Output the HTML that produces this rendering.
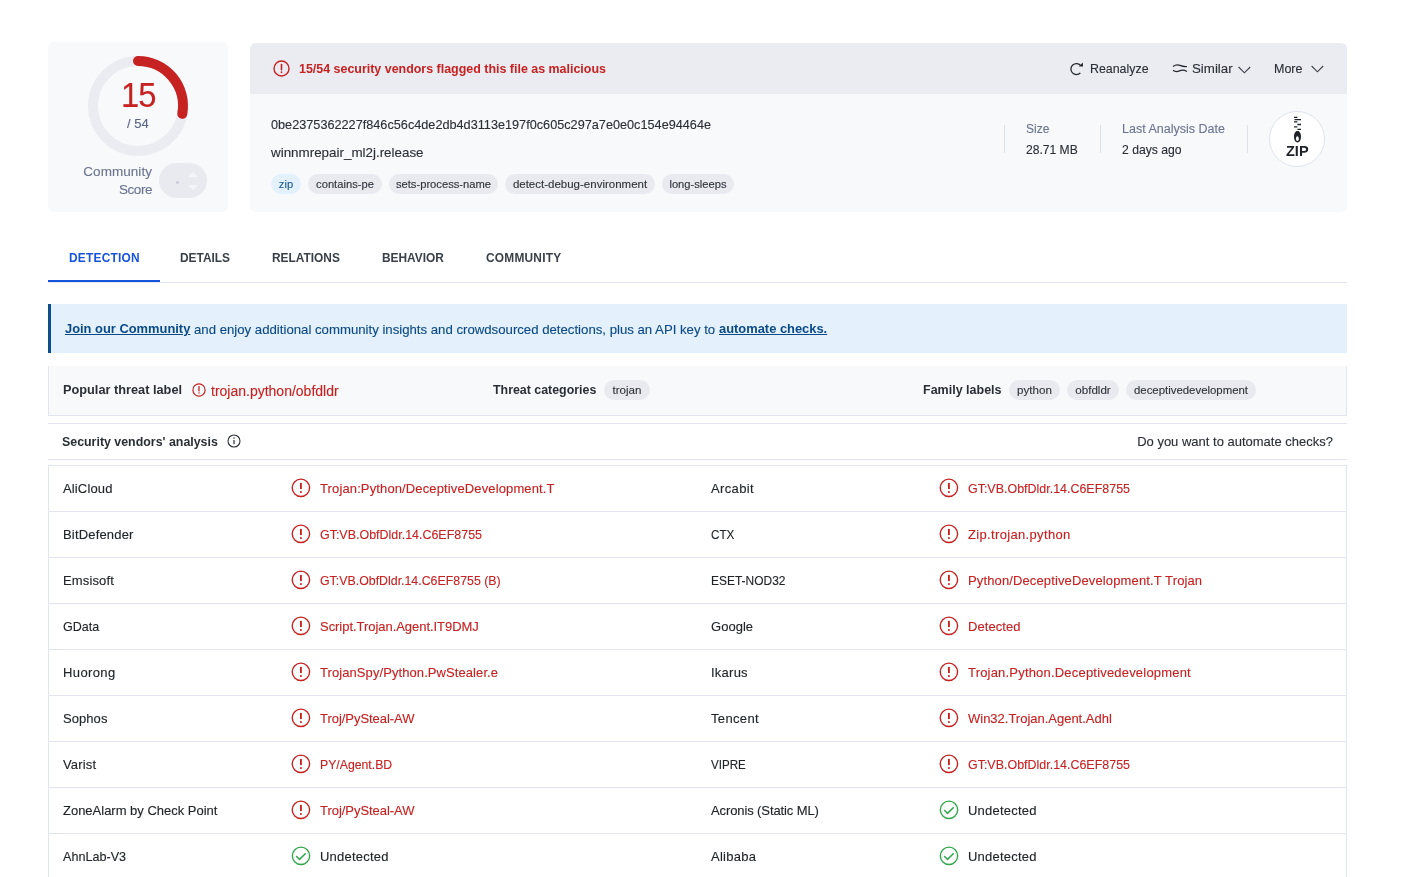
<!DOCTYPE html>
<html><head><meta charset="utf-8">
<style>
*{box-sizing:border-box;margin:0;padding:0}
html,body{width:1405px;height:877px;overflow:hidden;background:#fff}
body{will-change:transform}
.t,.tag{-webkit-text-stroke:0.12px currentColor}
.t[style*="font-weight:bold"],#tabs .t{-webkit-text-stroke:0}
body{font-family:"Liberation Sans",sans-serif;color:#212529;position:relative}
.abs{position:absolute}
.t{position:absolute;white-space:nowrap;line-height:1}
#score{left:48px;top:42px;width:180px;height:170px;background:#f8f9fb;border-radius:6px}
#main{left:250px;top:43px;width:1097px;height:169px;background:#f8f9fb;border-radius:6px;overflow:hidden}
#mhead{left:0;top:0;width:1097px;height:51px;background:#ebecf1}
.red{color:#c62222}
.tag{position:absolute;height:20px;border-radius:10px;background:#e9eaef;color:#2f343b;font-size:11.2px;line-height:20px;padding:0;text-align:center;white-space:nowrap}
.vdiv{position:absolute;width:1px;background:#dfe1e8;top:125px;height:28px}
.lbl{color:#6b7590}
#tabs .t{font-weight:bold;font-size:11.9px;color:#394049;top:253px!important}
#banner{left:48px;top:304px;width:1299px;height:49px;background:#e4f1fc;border-left:3px solid #0c4d8a}
#threat{left:48px;top:366px;width:1299px;height:50px;background:#f8f9fb;border:1px solid #e2e5f0;border-top:none}
#sech{left:48px;top:423px;width:1299px;height:37px;border-top:1px solid #e2e5f0;border-bottom:1px solid #e2e5f0}
#table{left:48px;top:465px;width:1299px;height:420px;border:1px solid #e2e5f0;border-bottom:none}
.row{position:absolute;left:0;width:1297px;height:46px;border-bottom:1px solid #e2e5f0}
.row .t{font-size:13px;top:16px}
.ico{position:absolute;width:20px;height:20px;top:12px}
</style></head>
<body>
<!-- score card -->
<div id="score" class="abs">
  <svg class="abs" style="left:0;top:0" width="180" height="170" viewBox="0 0 180 170">
    <circle cx="90" cy="64" r="45" fill="none" stroke="#ebecf1" stroke-width="10"/>
    <path d="M90 19 A45 45 0 0 1 134.3 71.8" fill="none" stroke="#c62222" stroke-width="10" stroke-linecap="round"/>
  </svg>
  <div class="t red" style="left:73px;top:36px;font-size:34.5px;letter-spacing:-1px;transform:scaleX(0.95);transform-origin:0 0">15</div>
  <div class="t" style="left:79px;top:75px;font-size:13px;color:#5a6580">/ 54</div>
  <div class="t lbl" style="right:76px;top:121px;font-size:13.5px;text-align:right;line-height:18px;letter-spacing:0.05px">Community</div><div class="t lbl" style="right:76px;top:139px;font-size:13.5px;text-align:right;line-height:18px;letter-spacing:-0.45px">Score</div>
  <div class="abs" style="left:111px;top:121px;width:48px;height:35px;border-radius:18px;background:#e9eaef"></div>
  <div class="abs" style="left:128px;top:139px;width:3px;height:3px;border-radius:2px;background:#c9ccd6"></div>
  <svg class="abs" style="left:138px;top:126px" width="14" height="26" viewBox="0 0 14 26"><path d="M2 9 L7 4 L12 9Z M2 17 L7 22 L12 17Z" fill="#f4f5f8"/></svg>

</div>
<div id="main" class="abs">

  <div id="mhead" class="abs">
    <svg class="abs" style="left:23px;top:17px" width="17" height="17" viewBox="0 0 17 17"><circle cx="8.5" cy="8.5" r="7.5" fill="none" stroke="#c62222" stroke-width="1.4"/><path d="M8.5 4.5V9.8" stroke="#c62222" stroke-width="1.6" stroke-linecap="round"/><circle cx="8.5" cy="12.2" r="0.9" fill="#c62222"/></svg>
    <div class="t red" style="left:49px;top:20px;font-size:12.45px;font-weight:bold">15/54 security vendors flagged this file as malicious</div>
    <svg class="abs" style="left:820px;top:19px" width="14" height="14" viewBox="0 0 14 14"><path d="M10.39 10.89 A5.5 5.5 0 1 1 10.6 3.5" fill="none" stroke="#22272e" stroke-width="1.3"/><path d="M8.9 4.4 L13 4.4 L12.8 0.6Z" fill="#22272e"/></svg>
    <div class="t" style="left:840px;top:20px;font-size:12.4px;color:#2a2f36">Reanalyze</div>
    <svg class="abs" style="left:922px;top:20px" width="16" height="12" viewBox="0 0 16 12"><path d="M1 3.4 Q4.5 0.9 8 2.4 T15 3.5 M1 7.3 Q4 9.6 7.5 7.9 T15 8.6" fill="none" stroke="#22272e" stroke-width="1.2"/></svg>
    <div class="t" style="left:942px;top:19px;font-size:13.3px;color:#2a2f36">Similar</div>
    <svg class="abs" style="left:988px;top:23px" width="13" height="9" viewBox="0 0 13 9"><path d="M0.6 1 L6.4 6.8 L12.2 1" fill="none" stroke="#3a3f47" stroke-width="1.1"/></svg>
    <div class="t" style="left:1024px;top:20px;font-size:12.5px;color:#2a2f36">More</div>
    <svg class="abs" style="left:1061px;top:22px" width="13" height="9" viewBox="0 0 13 9"><path d="M0.6 1 L6.4 6.8 L12.2 1" fill="none" stroke="#3a3f47" stroke-width="1.1"/></svg>
  </div>
  <div class="t" style="left:21px;top:76px;font-size:12.7px;color:#2a2f36">0be2375362227f846c56c4de2db4d3113e197f0c605c297a7e0e0c154e94464e</div>
  <div class="t" style="left:21px;top:103px;font-size:13.4px;color:#2a2f36">winnmrepair_ml2j.release</div>
  <div class="tag" style="left:21px;top:131px;width:30px;background:#e3f1fd;color:#1b5a96">zip</div>
  <div class="tag" style="left:58px;top:131px;width:74px">contains-pe</div>
  <div class="tag" style="left:139px;top:131px;width:109px">sets-process-name</div>
  <div class="tag" style="left:255px;top:131px;width:150px;font-size:11.5px">detect-debug-environment</div>
  <div class="tag" style="left:412px;top:131px;width:72px">long-sleeps</div>
  <div class="vdiv" style="left:754px;top:82px"></div>
  <div class="vdiv" style="left:850px;top:82px"></div>
  <div class="vdiv" style="left:997px;top:82px"></div>
  <div class="t lbl" style="left:776px;top:80px;font-size:12px">Size</div>
  <div class="t" style="left:776px;top:101px;font-size:12.1px;color:#2a2f36">28.71 MB</div>
  <div class="t lbl" style="left:872px;top:80px;font-size:12.5px">Last Analysis Date</div>
  <div class="t" style="left:872px;top:101px;font-size:12.2px;color:#2a2f36">2 days ago</div>
  <div class="abs" style="left:1019px;top:68px;width:56px;height:56px;border-radius:50%;background:#fff;border:1px solid #dfe2ec"></div>
  <svg class="abs" style="left:1043px;top:73px" width="10" height="28" viewBox="0 0 10 28"><path d="M1 1.3H4.4 M1.5 3.6H8 M1 5.9H4.4 M4.4 8.5H8 M1 10.9H4.4 M4.4 13.4H8" stroke="#1f2329" stroke-width="1.3"/><path d="M4.5 15 C2.2 15 1 17.5 1 20.7 C1 24.2 2.5 26.4 4.5 26.4 C6.5 26.4 8 24.2 8 20.7 C8 17.5 6.8 15 4.5 15Z M4.4 20.3 C3.5 20.3 3 21.3 3 22.8 C3 24.3 3.6 25 4.4 25 C5.2 25 5.8 24.3 5.8 22.8 C5.8 21.3 5.3 20.3 4.4 20.3Z" fill="#1f2329" fill-rule="evenodd"/></svg>
  <div class="t" style="left:1036px;top:101px;font-size:14.5px;font-weight:bold;color:#1f2329">ZIP</div>
</div>

<div id="tabs">
  <div class="t" style="left:69px;top:252px;color:#1553dc;letter-spacing:0.25px">DETECTION</div>
  <div class="t" style="left:180px;top:252px">DETAILS</div>
  <div class="t" style="left:272px;top:252px">RELATIONS</div>
  <div class="t" style="left:382px;top:252px">BEHAVIOR</div>
  <div class="t" style="left:486px;top:252px;letter-spacing:0.22px">COMMUNITY</div>
</div>
<div class="abs" style="left:48px;top:282px;width:1299px;height:1px;background:#e2e5f0"></div>
<div class="abs" style="left:48px;top:280px;width:112px;height:2px;background:#1553dc"></div>
<div id="banner" class="abs">
  <div class="t" style="left:14px;top:19px;font-size:12.9px;font-weight:bold;color:#0a4a87;text-decoration:underline">Join our Community</div>
  <div class="t" style="left:143px;top:19px;font-size:13.2px;color:#0a4a87">and enjoy additional community insights and crowdsourced detections, plus an API key to</div>
  <div class="t" style="left:668px;top:19px;font-size:12.9px;font-weight:bold;color:#0a4a87;text-decoration:underline">automate checks.</div>
</div>
<div id="threat" class="abs">
  <div class="t" style="left:14px;top:18px;font-size:12.76px;font-weight:bold;color:#2a2f36">Popular threat label</div>
  <svg class="abs" style="left:143px;top:17px" width="14" height="14" viewBox="0 0 14 14"><circle cx="7" cy="7" r="6.1" fill="none" stroke="#c62222" stroke-width="1.2"/><path d="M7 3.6V7.9" stroke="#c62222" stroke-width="1.3" stroke-linecap="round"/><circle cx="7" cy="10" r="0.75" fill="#c62222"/></svg>
  <div class="t red" style="left:162px;top:18px;font-size:14px">trojan.python/obfdldr</div>
  <div class="t" style="left:444px;top:18px;font-size:12.4px;font-weight:bold;color:#2a2f36">Threat categories</div>
  <div class="tag" style="left:555px;top:14px;width:46px;font-size:11.6px">trojan</div>
  <div class="t" style="left:874px;top:18px;font-size:12.5px;font-weight:bold;color:#2a2f36">Family labels</div>
  <div class="tag" style="left:960px;top:14px;width:51px;font-size:11.6px">python</div>
  <div class="tag" style="left:1018px;top:14px;width:52px;font-size:11.6px">obfdldr</div>
  <div class="tag" style="left:1077px;top:14px;width:130px;font-size:11.4px">deceptivedevelopment</div>
</div>
<div id="sech" class="abs">
  <div class="t" style="left:14px;top:12px;font-size:12.4px;font-weight:bold;color:#2a2f36">Security vendors' analysis</div>
  <svg class="abs" style="left:179px;top:10px" width="14" height="14" viewBox="0 0 14 14"><circle cx="7" cy="7" r="6" fill="none" stroke="#2a2f36" stroke-width="1.1"/><path d="M7 6V10.3" stroke="#2a2f36" stroke-width="1.2"/><circle cx="7" cy="4" r="0.75" fill="#2a2f36"/></svg>
  <div class="t" style="right:14px;top:11px;font-size:13px;color:#2a2f36">Do you want to automate checks?</div>
</div>
<div id="table" class="abs">
<div class="row" style="top:0px"><div class="t" style="left:14px;letter-spacing:0.14px">AliCloud</div><svg class="ico" style="left:242px" width="20" height="20" viewBox="0 0 20 20"><circle cx="9.9" cy="9.8" r="8.7" fill="none" stroke="#c62222" stroke-width="1.4"/><path d="M9.9 4.9V11.1" stroke="#c62222" stroke-width="1.9"/><rect x="9" y="13.2" width="1.8" height="1.7" fill="#c62222"/></svg><div class="t red" style="left:271px;letter-spacing:0.128px">Trojan:Python/DeceptiveDevelopment.T</div><div class="t" style="left:662px;letter-spacing:0.355px">Arcabit</div><svg class="ico" style="left:890px" width="20" height="20" viewBox="0 0 20 20"><circle cx="9.9" cy="9.8" r="8.7" fill="none" stroke="#c62222" stroke-width="1.4"/><path d="M9.9 4.9V11.1" stroke="#c62222" stroke-width="1.9"/><rect x="9" y="13.2" width="1.8" height="1.7" fill="#c62222"/></svg><div class="t red" style="left:919px;transform:scaleX(0.958);transform-origin:0 0">GT:VB.ObfDldr.14.C6EF8755</div></div>
<div class="row" style="top:46px"><div class="t" style="left:14px;letter-spacing:0.174px">BitDefender</div><svg class="ico" style="left:242px" width="20" height="20" viewBox="0 0 20 20"><circle cx="9.9" cy="9.8" r="8.7" fill="none" stroke="#c62222" stroke-width="1.4"/><path d="M9.9 4.9V11.1" stroke="#c62222" stroke-width="1.9"/><rect x="9" y="13.2" width="1.8" height="1.7" fill="#c62222"/></svg><div class="t red" style="left:271px;transform:scaleX(0.958);transform-origin:0 0">GT:VB.ObfDldr.14.C6EF8755</div><div class="t" style="left:662px;transform:scaleX(0.9);transform-origin:0 0">CTX</div><svg class="ico" style="left:890px" width="20" height="20" viewBox="0 0 20 20"><circle cx="9.9" cy="9.8" r="8.7" fill="none" stroke="#c62222" stroke-width="1.4"/><path d="M9.9 4.9V11.1" stroke="#c62222" stroke-width="1.9"/><rect x="9" y="13.2" width="1.8" height="1.7" fill="#c62222"/></svg><div class="t red" style="left:919px;letter-spacing:0.341px">Zip.trojan.python</div></div>
<div class="row" style="top:92px"><div class="t" style="left:14px;letter-spacing:0.137px">Emsisoft</div><svg class="ico" style="left:242px" width="20" height="20" viewBox="0 0 20 20"><circle cx="9.9" cy="9.8" r="8.7" fill="none" stroke="#c62222" stroke-width="1.4"/><path d="M9.9 4.9V11.1" stroke="#c62222" stroke-width="1.9"/><rect x="9" y="13.2" width="1.8" height="1.7" fill="#c62222"/></svg><div class="t red" style="left:271px;transform:scaleX(0.9509);transform-origin:0 0">GT:VB.ObfDldr.14.C6EF8755 (B)</div><div class="t" style="left:662px;transform:scaleX(0.9206);transform-origin:0 0">ESET-NOD32</div><svg class="ico" style="left:890px" width="20" height="20" viewBox="0 0 20 20"><circle cx="9.9" cy="9.8" r="8.7" fill="none" stroke="#c62222" stroke-width="1.4"/><path d="M9.9 4.9V11.1" stroke="#c62222" stroke-width="1.9"/><rect x="9" y="13.2" width="1.8" height="1.7" fill="#c62222"/></svg><div class="t red" style="left:919px;letter-spacing:0.13px">Python/DeceptiveDevelopment.T Trojan</div></div>
<div class="row" style="top:138px"><div class="t" style="left:14px;transform:scaleX(0.9633);transform-origin:0 0">GData</div><svg class="ico" style="left:242px" width="20" height="20" viewBox="0 0 20 20"><circle cx="9.9" cy="9.8" r="8.7" fill="none" stroke="#c62222" stroke-width="1.4"/><path d="M9.9 4.9V11.1" stroke="#c62222" stroke-width="1.9"/><rect x="9" y="13.2" width="1.8" height="1.7" fill="#c62222"/></svg><div class="t red" style="left:271px;letter-spacing:-0.044px">Script.Trojan.Agent.IT9DMJ</div><div class="t" style="left:662px;letter-spacing:0.036px">Google</div><svg class="ico" style="left:890px" width="20" height="20" viewBox="0 0 20 20"><circle cx="9.9" cy="9.8" r="8.7" fill="none" stroke="#c62222" stroke-width="1.4"/><path d="M9.9 4.9V11.1" stroke="#c62222" stroke-width="1.9"/><rect x="9" y="13.2" width="1.8" height="1.7" fill="#c62222"/></svg><div class="t red" style="left:919px;letter-spacing:0.079px">Detected</div></div>
<div class="row" style="top:184px"><div class="t" style="left:14px;letter-spacing:0.388px">Huorong</div><svg class="ico" style="left:242px" width="20" height="20" viewBox="0 0 20 20"><circle cx="9.9" cy="9.8" r="8.7" fill="none" stroke="#c62222" stroke-width="1.4"/><path d="M9.9 4.9V11.1" stroke="#c62222" stroke-width="1.9"/><rect x="9" y="13.2" width="1.8" height="1.7" fill="#c62222"/></svg><div class="t red" style="left:271px;letter-spacing:0.08px">TrojanSpy/Python.PwStealer.e</div><div class="t" style="left:662px;letter-spacing:0.239px">Ikarus</div><svg class="ico" style="left:890px" width="20" height="20" viewBox="0 0 20 20"><circle cx="9.9" cy="9.8" r="8.7" fill="none" stroke="#c62222" stroke-width="1.4"/><path d="M9.9 4.9V11.1" stroke="#c62222" stroke-width="1.9"/><rect x="9" y="13.2" width="1.8" height="1.7" fill="#c62222"/></svg><div class="t red" style="left:919px;letter-spacing:0.194px">Trojan.Python.Deceptivedevelopment</div></div>
<div class="row" style="top:230px"><div class="t" style="left:14px;letter-spacing:0.061px">Sophos</div><svg class="ico" style="left:242px" width="20" height="20" viewBox="0 0 20 20"><circle cx="9.9" cy="9.8" r="8.7" fill="none" stroke="#c62222" stroke-width="1.4"/><path d="M9.9 4.9V11.1" stroke="#c62222" stroke-width="1.9"/><rect x="9" y="13.2" width="1.8" height="1.7" fill="#c62222"/></svg><div class="t red" style="left:271px;letter-spacing:-0.044px">Troj/PySteal-AW</div><div class="t" style="left:662px;letter-spacing:0.342px">Tencent</div><svg class="ico" style="left:890px" width="20" height="20" viewBox="0 0 20 20"><circle cx="9.9" cy="9.8" r="8.7" fill="none" stroke="#c62222" stroke-width="1.4"/><path d="M9.9 4.9V11.1" stroke="#c62222" stroke-width="1.9"/><rect x="9" y="13.2" width="1.8" height="1.7" fill="#c62222"/></svg><div class="t red" style="left:919px;letter-spacing:-0.011px">Win32.Trojan.Agent.Adhl</div></div>
<div class="row" style="top:276px"><div class="t" style="left:14px;letter-spacing:0.147px">Varist</div><svg class="ico" style="left:242px" width="20" height="20" viewBox="0 0 20 20"><circle cx="9.9" cy="9.8" r="8.7" fill="none" stroke="#c62222" stroke-width="1.4"/><path d="M9.9 4.9V11.1" stroke="#c62222" stroke-width="1.9"/><rect x="9" y="13.2" width="1.8" height="1.7" fill="#c62222"/></svg><div class="t red" style="left:271px;transform:scaleX(0.9424);transform-origin:0 0">PY/Agent.BD</div><div class="t" style="left:662px;transform:scaleX(0.892);transform-origin:0 0">VIPRE</div><svg class="ico" style="left:890px" width="20" height="20" viewBox="0 0 20 20"><circle cx="9.9" cy="9.8" r="8.7" fill="none" stroke="#c62222" stroke-width="1.4"/><path d="M9.9 4.9V11.1" stroke="#c62222" stroke-width="1.9"/><rect x="9" y="13.2" width="1.8" height="1.7" fill="#c62222"/></svg><div class="t red" style="left:919px;transform:scaleX(0.958);transform-origin:0 0">GT:VB.ObfDldr.14.C6EF8755</div></div>
<div class="row" style="top:322px"><div class="t" style="left:14px;letter-spacing:-0.01px">ZoneAlarm by Check Point</div><svg class="ico" style="left:242px" width="20" height="20" viewBox="0 0 20 20"><circle cx="9.9" cy="9.8" r="8.7" fill="none" stroke="#c62222" stroke-width="1.4"/><path d="M9.9 4.9V11.1" stroke="#c62222" stroke-width="1.9"/><rect x="9" y="13.2" width="1.8" height="1.7" fill="#c62222"/></svg><div class="t red" style="left:271px;letter-spacing:-0.044px">Troj/PySteal-AW</div><div class="t" style="left:662px;letter-spacing:-0.106px">Acronis (Static ML)</div><svg class="ico" style="left:890px" width="20" height="20" viewBox="0 0 20 20"><circle cx="10" cy="9.8" r="8.7" fill="none" stroke="#30a84b" stroke-width="1.4"/><path d="M5.2 10 L8.5 13.4 L14.8 7.2" fill="none" stroke="#30a84b" stroke-width="1.5"/></svg><div class="t " style="left:919px;letter-spacing:0.222px">Undetected</div></div>
<div class="row" style="top:368px"><div class="t" style="left:14px;transform:scaleX(0.9698);transform-origin:0 0">AhnLab-V3</div><svg class="ico" style="left:242px" width="20" height="20" viewBox="0 0 20 20"><circle cx="10" cy="9.8" r="8.7" fill="none" stroke="#30a84b" stroke-width="1.4"/><path d="M5.2 10 L8.5 13.4 L14.8 7.2" fill="none" stroke="#30a84b" stroke-width="1.5"/></svg><div class="t " style="left:271px;letter-spacing:0.222px">Undetected</div><div class="t" style="left:662px;letter-spacing:0.254px">Alibaba</div><svg class="ico" style="left:890px" width="20" height="20" viewBox="0 0 20 20"><circle cx="10" cy="9.8" r="8.7" fill="none" stroke="#30a84b" stroke-width="1.4"/><path d="M5.2 10 L8.5 13.4 L14.8 7.2" fill="none" stroke="#30a84b" stroke-width="1.5"/></svg><div class="t " style="left:919px;letter-spacing:0.222px">Undetected</div></div>
</div>
</body></html>
